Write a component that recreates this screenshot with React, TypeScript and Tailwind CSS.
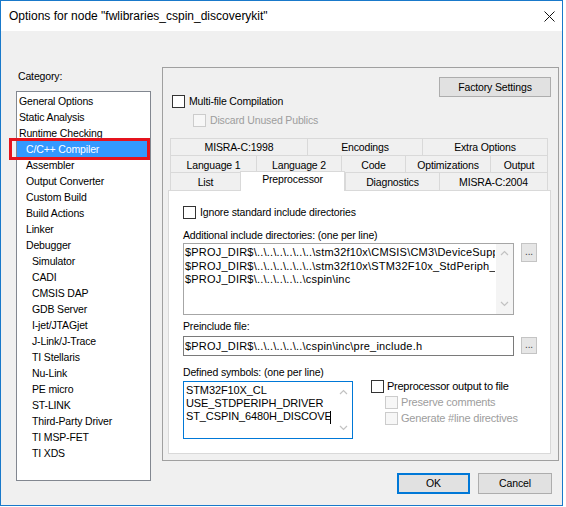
import React from "react";

function Check({ disabled = false }: { disabled?: boolean }) {
  return (
    <div
      className={
        disabled
          ? "w-[13px] h-[13px] border border-[#cccccc] bg-[#f7f7f7] shrink-0"
          : "w-[13px] h-[13px] border border-[#333333] bg-white shrink-0"
      }
    />
  );
}

function UpDown({ top, bottom }: { top: string; bottom: string }) {
  return (
    <div className="absolute right-0 top-0 bottom-0 w-[17px]">
      <svg className={"absolute left-[4px] " + top} width="9" height="6" viewBox="0 0 9 6">
        <path d="M1 5 L4.5 1.5 L8 5" fill="none" stroke="#c2c2c2" strokeWidth="1.2" />
      </svg>
      <svg className={"absolute left-[4px] " + bottom} width="9" height="6" viewBox="0 0 9 6">
        <path d="M1 1 L4.5 4.5 L8 1" fill="none" stroke="#c2c2c2" strokeWidth="1.2" />
      </svg>
    </div>
  );
}

function Tab({ label, cls }: { label: string; cls: string }) {
  return (
    <div
      className={
        "h-full flex items-center justify-center pt-[1px] border-t border-l border-[#d9d9d9] bg-[#f0f0f0] whitespace-nowrap " +
        cls
      }
    >
      {label}
    </div>
  );
}

const items: [string, number][] = [
  ["General Options", 0],
  ["Static Analysis", 0],
  ["Runtime Checking", 0],
  ["C/C++ Compiler", 1],
  ["Assembler", 1],
  ["Output Converter", 1],
  ["Custom Build", 1],
  ["Build Actions", 1],
  ["Linker", 1],
  ["Debugger", 1],
  ["Simulator", 2],
  ["CADI", 2],
  ["CMSIS DAP", 2],
  ["GDB Server", 2],
  ["I-jet/JTAGjet", 2],
  ["J-Link/J-Trace", 2],
  ["TI Stellaris", 2],
  ["Nu-Link", 2],
  ["PE micro", 2],
  ["ST-LINK", 2],
  ["Third-Party Driver", 2],
  ["TI MSP-FET", 2],
  ["TI XDS", 2],
];

export default function App() {
  return (
    <div className="w-[566px] h-[507px] bg-white font-['Liberation_Sans',Arial,sans-serif] text-[10.5px] tracking-[-0.15px] leading-[13px] text-black">
      <div className="w-[563px] h-[506px] border border-[#1979ca] flex flex-col bg-[#f0f0f0]">
        {/* title bar */}
        <div className="h-[30px] shrink-0 bg-white flex items-center justify-between pl-[8px] pr-[7px]">
          <span className="text-[12px] tracking-normal font-['Liberation_Sans',Arial,sans-serif]">
            Options for node "fwlibraries_cspin_discoverykit"
          </span>
          <svg width="11" height="11" viewBox="0 0 11 11">
            <path d="M0.5 0.5 L10.5 10.5 M10.5 0.5 L0.5 10.5" stroke="#111" strokeWidth="1" />
          </svg>
        </div>

        {/* body */}
        <div className="flex flex-1">
          {/* left column */}
          <div className="w-[150px] shrink-0 pl-[15px] pt-[39px]">
            <div className="h-[13px] pl-[2px]">Category:</div>
            <div className="relative mt-[8px]">
              <div className="w-[135px] h-[390px] bg-white border border-[#828790] pt-[1px]">
                {items.map(([name, lvl]) => {
                  const sel = name === "C/C++ Compiler";
                  const pad = lvl === 0 ? "pl-[2px]" : lvl === 1 ? "pl-[9px]" : "pl-[15px]";
                  return (
                    <div
                      key={name}
                      className={
                        "h-[16px] flex items-center whitespace-nowrap " +
                        pad +
                        (sel ? " w-[131px] bg-[#3399ff] text-white" : "")
                      }
                    >
                      {name}
                    </div>
                  );
                })}
              </div>
              <div className="absolute left-[-7px] top-[47px] w-[141px] h-[22px] border-[3px] border-[#e5131d]" />
            </div>
          </div>

          {/* right column */}
          <div className="ml-[11px] flex-1 pt-[36px] flex flex-col">
            <div className="w-[397px] h-[394px] border border-[#a0a0a0] flex flex-col">
              {/* top area */}
              <div className="h-[70px] shrink-0 flex justify-between">
                <div className="pl-[9px] pt-[27px]">
                  <div className="h-[13px] flex items-center gap-[4px]">
                    <Check />
                    <span>Multi-file Compilation</span>
                  </div>
                  <div className="h-[13px] mt-[6px] ml-[21px] flex items-center gap-[4px] text-[#9d9d9d]">
                    <Check disabled />
                    <span>Discard Unused Publics</span>
                  </div>
                </div>
                <div className="pt-[9px] pr-[7px]">
                  <div className="w-[112px] h-[20px] bg-[#e1e1e1] border border-[#adadad] flex items-center justify-center">
                    Factory Settings
                  </div>
                </div>
              </div>

              {/* tabs */}
              <div className="ml-[7px] w-[378px] shrink-0">
                <div className="h-[17px] flex">
                  <Tab label="MISRA-C:1998" cls="w-[137px]" />
                  <Tab label="Encodings" cls="w-[115px]" />
                  <Tab label="Extra Options" cls="w-[126px] border-r" />
                </div>
                <div className="h-[17px] flex">
                  <Tab label="Language 1" cls="w-[86px] pt-[3px]" />
                  <Tab label="Language 2" cls="w-[85px] pt-[3px]" />
                  <Tab label="Code" cls="w-[64px] pt-[3px]" />
                  <Tab label="Optimizations" cls="w-[85px] pt-[3px]" />
                  <Tab label="Output" cls="w-[58px] border-r pt-[3px]" />
                </div>
                <div className="h-[18px] flex items-start">
                  <Tab label="List" cls="w-[70px] pt-[2px]" />
                  <div className="relative z-10 -mt-[1px] w-[105px] h-[20px] bg-white border-t border-l border-r border-[#d9d9d9] flex justify-center pt-[1px] whitespace-nowrap">
                    Preprocessor
                  </div>
                  <Tab label="Diagnostics" cls="w-[94px] pt-[2px]" />
                  <Tab label="MISRA-C:2004" cls="w-[109px] border-r pt-[2px]" />
                </div>
              </div>

              {/* panel */}
              <div className="ml-[5px] w-[383px] h-[264px] shrink-0 bg-white border border-[#d9d9d9] pl-[14px] pt-[15px]">
                <div className="h-[13px] flex items-center gap-[4px]">
                  <Check />
                  <span>Ignore standard include directories</span>
                </div>
                <div className="mt-[10px] h-[13px]">Additional include directories: (one per line)</div>
                <div className="mt-[1px] flex items-start">
                  <div className="relative w-[331px] h-[72px] border border-[#a6a6a6] bg-white overflow-hidden">
                    <div className="absolute right-0 top-0 bottom-0 w-[17px] bg-[#f4f4f4]" />
                    <div className="w-[311px] overflow-hidden pl-[1px] pt-[2px] text-[11px] tracking-[0.2px] leading-[13.5px] whitespace-nowrap">
                      <div>$PROJ_DIR$\..\..\..\..\..\..\stm32f10x\CMSIS\CM3\DeviceSupport</div>
                      <div>$PROJ_DIR$\..\..\..\..\..\..\stm32f10x\STM32F10x_StdPeriph_Driver\inc</div>
                      <div>$PROJ_DIR$\..\..\..\..\..\cspin\inc</div>
                    </div>
                    <UpDown top="top-[6px]" bottom="bottom-[7px]" />
                  </div>
                  <div className="ml-[7px] w-[16px] h-[19px] bg-[#e6e6e6] border border-[#c4c4c4] flex items-center justify-center text-[#444] text-[10px] leading-none pb-[2px]">
                    ...
                  </div>
                </div>
                <div className="mt-[5px] h-[13px]">Preinclude file:</div>
                <div className="mt-[3px] flex items-start">
                  <div className="w-[331px] h-[20px] border border-[#7a7a7a] bg-white pl-[1px] flex items-center text-[11px] tracking-[0.2px] whitespace-nowrap overflow-hidden">
                    $PROJ_DIR$\..\..\..\..\..\cspin\inc\pre_include.h
                  </div>
                  <div className="ml-[7px] mt-[1px] w-[16px] h-[17px] bg-[#e6e6e6] border border-[#c4c4c4] flex items-center justify-center text-[#444] text-[10px] leading-none pb-[2px]">
                    ...
                  </div>
                </div>
                <div className="mt-[10px] h-[13px]">Defined symbols: (one per line)</div>
                <div className="mt-[1px] flex items-start">
                  <div className="relative mt-[1px] w-[170px] h-[58px] border border-[#0078d7] bg-white">
                    <div className="w-[147px] overflow-hidden pl-[2px] pt-[2px] text-[11px] tracking-[-0.1px] leading-[13px] whitespace-nowrap">
                      <div>STM32F10X_CL</div>
                      <div>USE_STDPERIPH_DRIVER</div>
                      <div>ST_CSPIN_6480H_DISCOVER</div>
                    </div>
                    <div className="absolute left-[146px] top-[29px] w-[1px] h-[13px] bg-black" />
                    <UpDown top="top-[7px]" bottom="bottom-[7px]" />
                  </div>
                  <div className="ml-[18px] flex flex-col">
                    <div className="h-[13px] flex items-center gap-[3px]">
                      <Check />
                      <span className="text-[11px] tracking-[-0.25px]">Preprocessor output to file</span>
                    </div>
                    <div className="mt-[3px] ml-[14px] h-[13px] flex items-center gap-[3px] text-[#9d9d9d]">
                      <Check disabled />
                      <span className="text-[11px] tracking-[-0.2px]">Preserve comments</span>
                    </div>
                    <div className="mt-[3px] ml-[14px] h-[13px] flex items-center gap-[3px] text-[#9d9d9d]">
                      <Check disabled />
                      <span className="text-[11px] tracking-[-0.2px]">Generate #line directives</span>
                    </div>
                  </div>
                </div>
              </div>
            </div>

            {/* buttons */}
            <div className="mt-[12px] flex justify-end gap-[8px] pr-[10px]">
              <div className="w-[73px] h-[21px] bg-[#e1e1e1] border-2 border-[#0078d7] flex items-center justify-center">
                OK
              </div>
              <div className="w-[74px] h-[21px] bg-[#e1e1e1] border border-[#adadad] flex items-center justify-center">
                Cancel
              </div>
            </div>
          </div>
        </div>
      </div>
    </div>
  );
}
